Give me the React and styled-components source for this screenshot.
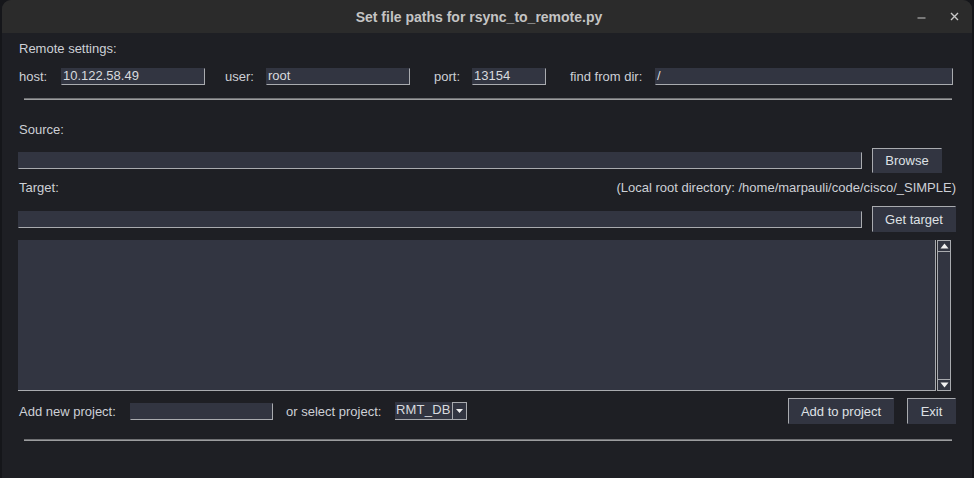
import React from "react";
import styled, { createGlobalStyle } from "styled-components";

const color = {
  desk: "#15161a",
  title: "#2b2b2b",
  body: "#1e1f24",
  field: "#323541",
  text: "#cdd0d6",
  light: "#a9abaf",
  dark: "#1a1b1f",
};

const GlobalStyle = createGlobalStyle`
  html, body {
    margin: 0;
    padding: 0;
    background: ${color.desk};
    font-family: "Liberation Sans", Arial, sans-serif;
    font-size: 13px;
    color: ${color.text};
  }
`;

const Window = styled.div`
  width: 970px;
  height: 478px;
  margin-left: 2px;
  background: ${color.body};
  border-radius: 9px 9px 0 0;
  overflow: hidden;
  display: flex;
  flex-direction: column;
`;
const TitleBar = styled.div`
  height: 33px;
  flex: none;
  background: ${color.title};
  position: relative;
  display: flex;
  align-items: center;
  justify-content: center;
`;
const Title = styled.div`
  font-family: "Liberation Sans", sans-serif;
  font-weight: bold;
  font-size: 14px;
  color: #c4c4c4;
  margin-right: 16px;
`;
const Controls = styled.div`
  position: absolute;
  right: 13px;
  top: 0;
  height: 33px;
  display: flex;
  align-items: center;
  gap: 24px;
`;
const Content = styled.div`
  display: flex;
  flex-direction: column;
  padding: 0 16px 0 16px;
`;
const Line = styled.div`
  height: 16px;
  line-height: 16px;
  margin-top: ${(p) => p.top}px;
  display: flex;
  justify-content: space-between;
  padding-left: 1px;
`;
const Row = styled.div`
  display: flex;
  align-items: center;
  height: ${(p) => p.h || 17}px;
  margin-top: ${(p) => p.top}px;
`;
const Label = styled.span`
  box-sizing: border-box;
  width: ${(p) => p.w}px;
  margin-left: ${(p) => p.ml || 0}px;
  padding-left: 1px;
  flex: none;
  white-space: nowrap;
  line-height: 15px;
`;
const Field = styled.div`
  box-sizing: border-box;
  width: ${(p) => p.w}px;
  height: 17px;
  flex: none;
  background: ${color.field};
  border-top: 1px solid ${color.field};
  border-left: 1px solid ${color.field};
  border-right: 1px solid ${color.light};
  border-bottom: 1px solid ${color.light};
  padding-left: 1px;
  line-height: 14px;
  color: #d8dade;
  white-space: nowrap;
  overflow: hidden;
`;
const Separator = styled.div`
  margin: ${(p) => p.top}px 4px 0 6px;
  height: 0;
  border-top: 1px solid #6e6f72;
  border-bottom: 1px solid #9c9d9f;
`;
const Button = styled.div`
  box-sizing: border-box;
  width: ${(p) => p.w}px;
  height: ${(p) => p.h || 26}px;
  margin-left: ${(p) => p.ml || 0}px;
  flex: none;
  background: ${color.field};
  border-top: 1px solid ${color.light};
  border-left: 1px solid ${color.light};
  border-right: 1px solid ${color.field};
  border-bottom: 1px solid ${color.field};
  display: flex;
  align-items: center;
  justify-content: center;
  color: #dfe1e5;
  white-space: nowrap;
`;
const TextPanel = styled.div`
  display: flex;
  height: 151px;
  margin-top: 8px;
  margin-right: 5px;
`;
const TextArea = styled.div`
  box-sizing: border-box;
  flex: 1;
  background: ${color.field};
  border-right: 1px solid ${color.light};
  border-bottom: 1px solid ${color.light};
`;
const ScrollBar = styled.div`
  box-sizing: border-box;
  width: 14px;
  margin-left: 1px;
  background: ${color.field};
  border: 1px solid ${color.light};
  display: flex;
  flex-direction: column;
  justify-content: space-between;
`;
const Arrow = styled.div`
  height: 10px;
  border-${(p) => (p.up ? "bottom" : "top")}: 1px solid ${color.light};
  display: flex;
  align-items: center;
  justify-content: center;
`;
const Combo = styled.div`
  box-sizing: border-box;
  display: flex;
  width: 72px;
  height: 18px;
  flex: none;
  background: ${color.field};
  border-bottom: 1px solid ${color.light};
  border-right: 1px solid ${color.light};
`;
const ComboText = styled.div`
  flex: 1;
  padding-left: 1px;
  line-height: 16px;
  color: #d8dade;
  overflow: hidden;
  white-space: nowrap;
  letter-spacing: 0.2px;
`;
const ComboArrow = styled.div`
  width: 13px;
  border-left: 1px solid ${color.light};
  border-top: 1px solid ${color.light};
  display: flex;
  align-items: center;
  justify-content: center;
`;
const Spacer = styled.div`
  flex: 1;
`;

const Tri = ({ up }) => (
  <svg width="9" height="6" viewBox="0 0 9 6">
    <polygon points={up ? "4.5,0.5 8.5,5.5 0.5,5.5" : "0.5,0.5 8.5,0.5 4.5,5.5"} fill="#f0f0f0" />
  </svg>
);

const App = () => {
  return (
    <>
      <GlobalStyle />
      <Window>
        <TitleBar>
          <Title>Set file paths for rsync_to_remote.py</Title>
          <Controls>
            <svg width="9" height="9" viewBox="0 0 9 9">
              <line x1="0.5" y1="6" x2="8.5" y2="6" stroke="#c8c8c8" strokeWidth="1.2" />
            </svg>
            <svg width="9" height="9" viewBox="0 0 9 9">
              <path d="M1 1 L8 8 M8 1 L1 8" stroke="#c8c8c8" strokeWidth="1.4" />
            </svg>
          </Controls>
        </TitleBar>
        <Content>
          <Line top={8}>Remote settings:</Line>
          <Row top={11}>
            <Label w={43}>host:</Label>
            <Field w={144}>10.122.58.49</Field>
            <Label w={42} ml={19}>user:</Label>
            <Field w={144}>root</Field>
            <Label w={39} ml={23}>port:</Label>
            <Field w={74}>13154</Field>
            <Label w={86} ml={23}>find from dir:</Label>
            <Field w={298}>/</Field>
          </Row>
          <Separator top={13} />
          <Line top={22}>Source:</Line>
          <Row top={10} h={25}>
            <Field w={844} />
            <Button w={70} ml={10} h={25}>Browse</Button>
          </Row>
          <Line top={7}>
            <span>Target:</span>
            <span>(Local root directory: /home/marpauli/code/cisco/_SIMPLE)</span>
          </Line>
          <Row top={10} h={26}>
            <Field w={844} />
            <Button w={84} ml={10}>Get target</Button>
          </Row>
          <TextPanel>
            <TextArea />
            <ScrollBar>
              <Arrow up>
                <Tri up />
              </Arrow>
              <Arrow>
                <Tri />
              </Arrow>
            </ScrollBar>
          </TextPanel>
          <Row top={7} h={26}>
            <Label w={112}>Add new project:</Label>
            <Field w={143} />
            <Label w={110} ml={12}>or select project:</Label>
            <Combo>
              <ComboText>RMT_DB</ComboText>
              <ComboArrow>
                <svg width="9" height="8" viewBox="0 0 9 8">
                  <polygon points="1,2 8,2 4.5,6" fill="#f0f0f0" />
                </svg>
              </ComboArrow>
            </Combo>
            <Spacer />
            <Button w={106}>Add to project</Button>
            <Button w={49} ml={13}>Exit</Button>
          </Row>
          <Separator top={15} />
        </Content>
      </Window>
    </>
  );
};

export default App;
